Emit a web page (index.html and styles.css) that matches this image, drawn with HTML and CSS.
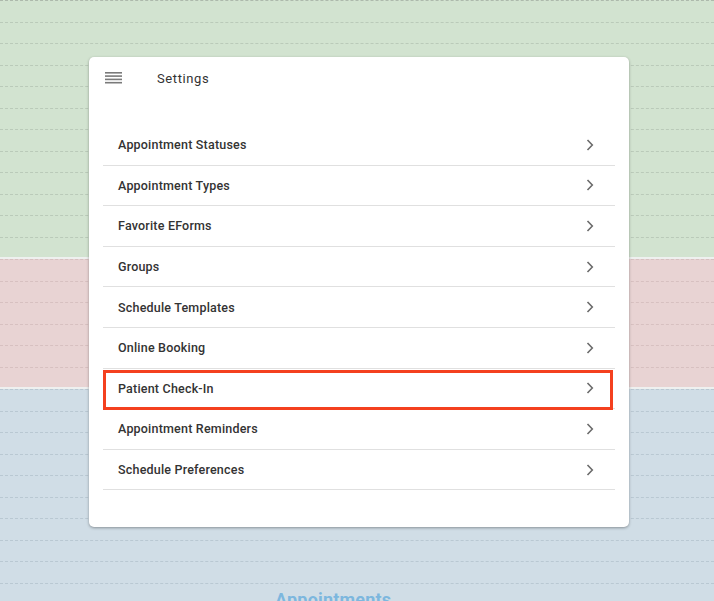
FILE: index.html
```html
<!DOCTYPE html>
<html>
<head>
<meta charset="utf-8">
<link rel="stylesheet" href="styles.css">
</head>
<body>
<div class="page">
  <div class="band band-green">
    <div class="slot slot-first"></div><div class="slot"></div><div class="slot"></div><div class="slot"></div>
    <div class="slot"></div><div class="slot"></div><div class="slot"></div><div class="slot"></div>
    <div class="slot"></div><div class="slot"></div><div class="slot"></div><div class="slot"></div>
  </div>
  <div class="band band-red">
    <div class="slot"></div><div class="slot"></div><div class="slot"></div>
    <div class="slot"></div><div class="slot"></div><div class="slot"></div>
  </div>
  <div class="band band-blue">
    <div class="slot"></div><div class="slot"></div><div class="slot"></div><div class="slot"></div><div class="slot"></div>
    <div class="slot"></div><div class="slot"></div><div class="slot"></div><div class="slot"></div><div class="slot"></div>
    <div class="band-label">Appointments</div>
  </div>

  <div class="card">
    <div class="card-header">
      <svg class="menu-icon" width="18" height="12" viewBox="0 0 18 12">
        <rect x="0" y="0" width="17" height="1.6" fill="#7a7a7a"/>
        <rect x="0" y="3.3" width="17" height="1.6" fill="#7a7a7a"/>
        <rect x="0" y="6.6" width="17" height="1.6" fill="#7a7a7a"/>
        <rect x="0" y="9.9" width="17" height="1.6" fill="#7a7a7a"/>
      </svg>
      <span class="card-title">Settings</span>
    </div>
    <ul class="list">
      <li class="row"><span>Appointment Statuses</span><svg class="chev" width="8" height="12" viewBox="0 0 8 12"><path d="M1.5 1 L6.3 6 L1.5 11" fill="none" stroke="#6b6b6b" stroke-width="1.6"/></svg></li>
      <li class="row"><span>Appointment Types</span><svg class="chev" width="8" height="12" viewBox="0 0 8 12"><path d="M1.5 1 L6.3 6 L1.5 11" fill="none" stroke="#6b6b6b" stroke-width="1.6"/></svg></li>
      <li class="row"><span>Favorite EForms</span><svg class="chev" width="8" height="12" viewBox="0 0 8 12"><path d="M1.5 1 L6.3 6 L1.5 11" fill="none" stroke="#6b6b6b" stroke-width="1.6"/></svg></li>
      <li class="row"><span>Groups</span><svg class="chev" width="8" height="12" viewBox="0 0 8 12"><path d="M1.5 1 L6.3 6 L1.5 11" fill="none" stroke="#6b6b6b" stroke-width="1.6"/></svg></li>
      <li class="row"><span>Schedule Templates</span><svg class="chev" width="8" height="12" viewBox="0 0 8 12"><path d="M1.5 1 L6.3 6 L1.5 11" fill="none" stroke="#6b6b6b" stroke-width="1.6"/></svg></li>
      <li class="row"><span>Online Booking</span><svg class="chev" width="8" height="12" viewBox="0 0 8 12"><path d="M1.5 1 L6.3 6 L1.5 11" fill="none" stroke="#6b6b6b" stroke-width="1.6"/></svg></li>
      <li class="row row-highlight"><span>Patient Check-In</span><svg class="chev" width="8" height="12" viewBox="0 0 8 12"><path d="M1.5 1 L6.3 6 L1.5 11" fill="none" stroke="#6b6b6b" stroke-width="1.6"/></svg></li>
      <li class="row"><span>Appointment Reminders</span><svg class="chev" width="8" height="12" viewBox="0 0 8 12"><path d="M1.5 1 L6.3 6 L1.5 11" fill="none" stroke="#6b6b6b" stroke-width="1.6"/></svg></li>
      <li class="row"><span>Schedule Preferences</span><svg class="chev" width="8" height="12" viewBox="0 0 8 12"><path d="M1.5 1 L6.3 6 L1.5 11" fill="none" stroke="#6b6b6b" stroke-width="1.6"/></svg></li>
    </ul>
  </div>
</div>
</body>
</html>
```
FILE: styles.css
```css
html, body {
  margin: 0;
  padding: 0;
  width: 714px;
  height: 601px;
  overflow: hidden;
  background: #eef0ef;
  font-family: Roboto, "Liberation Sans", sans-serif;
}

.page {
  position: relative;
  width: 714px;
  height: 601px;
  display: flex;
  flex-direction: column;
  gap: 2px;
}

.band {
  position: relative;
  overflow: hidden;
  flex: none;
}

.band-green { height: 257px; background: #d2e3d0; }
.band-red { height: 128px; background: #e8d3d3; }
.band-blue { flex: 1; background: #d0dde6; }

.slot {
  box-sizing: border-box;
  height: 21.5px;
  border-top: 1px dashed rgba(120, 130, 120, 0.26);
}

.band-red .slot { border-top-color: rgba(150, 120, 120, 0.2); }
.band-blue .slot { border-top-color: rgba(110, 130, 145, 0.23); }

.slot-first { border-top-color: rgba(90, 90, 90, 0.3); }

.band-label {
  position: absolute;
  left: 275px;
  top: 200px;
  font-size: 18px;
  font-weight: 700;
  color: #7db7de;
  letter-spacing: 0.2px;
}

.card {
  position: absolute;
  left: 89px;
  top: 57px;
  width: 540px;
  height: 470px;
  background: #fff;
  border-radius: 5px;
  box-shadow: 0 1px 3px rgba(0, 0, 0, 0.35);
}

.card-header {
  display: flex;
  align-items: center;
  height: 42px;
  padding-left: 16px;
}

.menu-icon {
  display: block;
}

.card-title {
  margin-left: 34px;
  font-size: 13px;
  color: #333;
  letter-spacing: 0.6px;
}

.list {
  list-style: none;
  margin: 26px 14px 0 14px;
  padding: 0;
}

.row {
  position: relative;
  box-sizing: border-box;
  height: 40.6px;
  display: flex;
  align-items: center;
  justify-content: space-between;
  padding: 0 21px 0 15px;
  border-bottom: 1px solid #e0e0e0;
  font-size: 12.5px;
  font-weight: 500;
  color: #333;
  letter-spacing: 0.2px;
}

.chev { display: block; }

.row-highlight::after {
  content: "";
  position: absolute;
  left: 0;
  top: 1px;
  right: 2px;
  bottom: -2px;
  border: 3px solid #f4401f;
  pointer-events: none;
}
```
